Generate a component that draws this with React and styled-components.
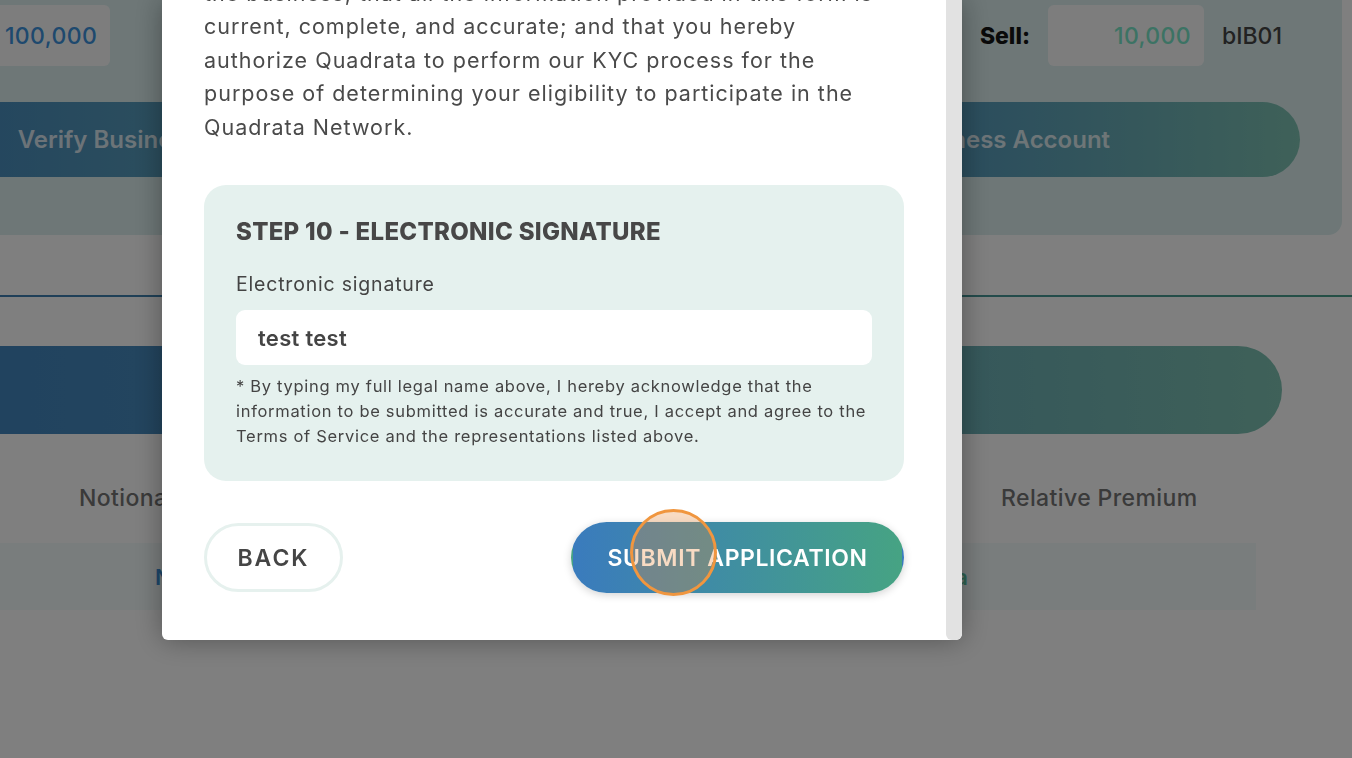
import React from "react";
import styled, { createGlobalStyle } from "styled-components";

const GlobalStyle = createGlobalStyle`
	html, body {
		margin: 0;
		padding: 0;
		background: #ffffff;
		overflow: hidden;
	}
	body {
		font-family: "Inter", "Noto Sans", sans-serif;
		width: 1352px;
		height: 758px;
	}
`;

const BLUE = "#3a7bbd";
const GREEN = "#46a383";

/* ---------- page behind the modal ---------- */

const Page = styled.div`
	width: 1560px;
	margin-left: -218px;
	display: flex;
	flex-direction: column;
`;

const TradePanel = styled.section`
	background: #dcefef;
	border-radius: 0 0 14px 14px;
	padding: 5px 42px 58px;
	display: flex;
	flex-direction: column;
	gap: 36px;
`;

const AmountRow = styled.div`
	display: flex;
	justify-content: space-between;
	align-items: center;
	padding: 0 18px 0 60px;
`;

const AmountGroup = styled.div`
	display: flex;
	align-items: center;
	gap: 18px;
`;

const AmountLabel = styled.span`
	font-size: 23px;
	font-weight: 800;
	color: #141414;
`;

const AmountBox = styled.div`
	width: 156px;
	height: 61px;
	box-sizing: border-box;
	border-radius: 6px;
	background: #fbfbfb;
	padding: 0 13px;
	display: flex;
	align-items: center;
	justify-content: flex-end;
	font-size: 23px;
	font-weight: 500;
	letter-spacing: 0.4px;
	color: ${({ tone }) => (tone === "green" ? "#78e6c8" : "#3d92dc")};
`;

const TokenName = styled.span`
	font-size: 23px;
	font-weight: 500;
	color: #444;
`;

const ActionRow = styled.div`
	display: flex;
	gap: 132px;
`;

const ActionButton = styled.div`
	flex: 1;
	height: 75px;
	border-radius: 38px;
	background: linear-gradient(90deg, #3c80c0 0%, #5a9fbb 55%, #7ec2b2 100%);
	display: flex;
	align-items: center;
	justify-content: center;
	font-size: 24px;
	font-weight: 600;
	color: rgba(255, 255, 255, 0.78);
`;

const Divider = styled.div`
	margin-top: 60px;
	margin-right: -20px;
	height: 2px;
	background: linear-gradient(90deg, #3c78b8, #4aa08c);
`;

const WideBar = styled.div`
	margin-top: 49px;
	width: 1500px;
	height: 88px;
	border-radius: 44px;
	background: linear-gradient(90deg, #3c80c0 0%, #4f93bc 45%, #7ec2b2 100%);
`;

const TableHead = styled.div`
	margin-top: 49px;
	height: 30px;
	display: grid;
	grid-template-columns: 460px 462px 1fr;
	padding-left: 297px;
	align-items: center;
	font-size: 23px;
	font-weight: 500;
	letter-spacing: 0.4px;
	color: #747474;
`;

const TableRow = styled.div`
	margin-top: 30px;
	width: 1474px;
	height: 67px;
	background: #f3fbfb;
	display: flex;
	align-items: center;
	padding: 0 288px 0 373px;
	box-sizing: border-box;
	justify-content: space-between;
	font-size: 22px;
	font-weight: 600;
`;

const Cell = styled.span`
	color: ${({ tone }) => (tone === "green" ? "#5cc4a4" : "#3d8fd6")};
`;

/* ---------- modal layer ---------- */

const Overlay = styled.div`
	position: fixed;
	inset: 0;
	background: rgba(0, 0, 0, 0.5);
	padding-left: 162px;
	display: flex;
	align-items: flex-start;
`;

const Modal = styled.div`
	width: 800px;
	height: 640px;
	background: #ffffff;
	border-radius: 0 0 6px 6px;
	box-shadow: 0 0 28px rgba(0, 0, 0, 0.35);
	display: flex;
	overflow: hidden;
`;

const ModalBody = styled.div`
	flex: 1;
	min-width: 0;
	display: flex;
	flex-direction: column;
	justify-content: flex-end;
	padding: 0 42px 47px;
	color: #4a4a4a;

	& > * {
		flex-shrink: 0;
	}
`;

const ScrollThumb = styled.div`
	width: 16px;
	flex-shrink: 0;
	background: #e2e2e2;
	border-radius: 0 0 6px 6px;
`;

const Statement = styled.p`
	margin: 0;
	font-size: 21.5px;
	line-height: 33.4px;
	letter-spacing: 1px;
	color: #4a4a4a;
	white-space: nowrap;
`;

const StepCard = styled.div`
	margin-top: 41px;
	height: 296px;
	box-sizing: border-box;
	background: #e5f1ee;
	border-radius: 22px;
	padding: 29px 32px 0;
	display: flex;
	flex-direction: column;
`;

const StepTitle = styled.h2`
	margin: 0;
	font-size: 24px;
	line-height: 36px;
	font-weight: 800;
	letter-spacing: 0.3px;
	color: #474747;
`;

const FieldLabel = styled.label`
	margin-top: 20px;
	font-size: 19.5px;
	line-height: 28px;
	letter-spacing: 0.8px;
	color: #444;
`;

const SignatureInput = styled.div`
	margin-top: 12px;
	height: 55px;
	border-radius: 9px;
	background: #ffffff;
	padding: 0 22px;
	display: flex;
	align-items: center;
	font-size: 22px;
	font-weight: 600;
	letter-spacing: 0.3px;
	color: #444;
`;

const Disclaimer = styled.p`
	margin: 9px 0 0;
	font-size: 16.5px;
	line-height: 25px;
	letter-spacing: 0.7px;
	color: #444;
	white-space: nowrap;
`;

const ButtonRow = styled.div`
	margin-top: 41px;
	display: flex;
	justify-content: space-between;
	align-items: center;
`;

const BackButton = styled.button`
	width: 139px;
	height: 69px;
	border-radius: 35px;
	border: 3px solid #e6f1ee;
	background: #ffffff;
	font-family: inherit;
	font-size: 23px;
	font-weight: 600;
	letter-spacing: 2px;
	color: #454545;
	cursor: pointer;
`;

const SubmitWrap = styled.div`
	position: relative;
`;

const SubmitButton = styled.button`
	width: 333px;
	height: 71px;
	border-radius: 36px;
	border: 2px solid transparent;
	background: linear-gradient(90deg, ${BLUE}, ${GREEN});
	box-shadow: 0 2px 8px rgba(0, 0, 0, 0.18);
	font-family: inherit;
	font-size: 23px;
	font-weight: 600;
	letter-spacing: 0.6px;
	color: #ffffff;
	white-space: nowrap;
	cursor: pointer;
`;

const ClickMarker = styled.span`
	position: absolute;
	left: 59px;
	top: -13px;
	width: 87px;
	height: 87px;
	box-sizing: border-box;
	border-radius: 50%;
	border: 3px solid #f0963f;
	background: rgba(232, 140, 62, 0.31);
	pointer-events: none;
`;

const App = () => {
	return (
		<>
			<GlobalStyle />
			<Page>
				<TradePanel>
					<AmountRow>
						<AmountGroup>
							<AmountLabel>Buy:</AmountLabel>
							<AmountBox>100,000</AmountBox>
						</AmountGroup>
						<AmountGroup>
							<AmountLabel>Sell:</AmountLabel>
							<AmountBox tone="green">10,000</AmountBox>
							<TokenName>bIB01</TokenName>
						</AmountGroup>
					</AmountRow>
					<ActionRow>
						<ActionButton>Verify Business Account</ActionButton>
						<ActionButton>Create Business Account</ActionButton>
					</ActionRow>
				</TradePanel>
				<Divider />
				<WideBar />
				<TableHead>
					<span>Notional Amount</span>
					<span>Price</span>
					<span>Relative Premium</span>
				</TableHead>
				<TableRow>
					<Cell>N/A</Cell>
					<Cell tone="green">Pending data</Cell>
				</TableRow>
			</Page>

			<Overlay>
				<Modal>
					<ModalBody>
						<Statement>
							By submitting, you confirm that you are authorized by
							<br />
							the business, that all the information provided in this form is
							<br />
							current, complete, and accurate; and that you hereby
							<br />
							authorize Quadrata to perform our KYC process for the
							<br />
							purpose of determining your eligibility to participate in the
							<br />
							Quadrata Network.
						</Statement>

						<StepCard>
							<StepTitle>STEP 10 - ELECTRONIC SIGNATURE</StepTitle>
							<FieldLabel>Electronic signature</FieldLabel>
							<SignatureInput>test test</SignatureInput>
							<Disclaimer>
								* By typing my full legal name above, I hereby acknowledge that the
								<br />
								information to be submitted is accurate and true, I accept and agree to the
								<br />
								Terms of Service and the representations listed above.
							</Disclaimer>
						</StepCard>

						<ButtonRow>
							<BackButton>BACK</BackButton>
							<SubmitWrap>
								<SubmitButton>SUBMIT APPLICATION</SubmitButton>
								<ClickMarker />
							</SubmitWrap>
						</ButtonRow>
					</ModalBody>
					<ScrollThumb />
				</Modal>
			</Overlay>
		</>
	);
};

export default App;
